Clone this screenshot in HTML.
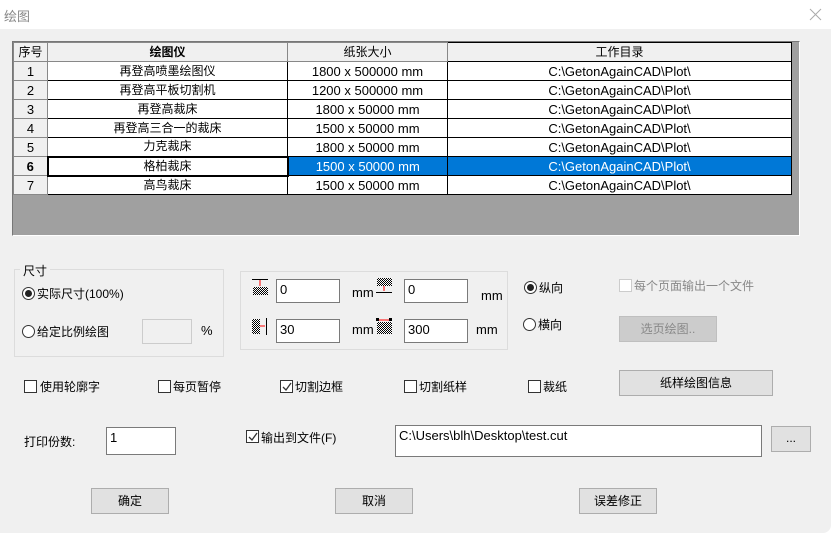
<!DOCTYPE html><html><head><meta charset="utf-8"><style>
*{margin:0;padding:0;box-sizing:border-box}
body{width:831px;height:533px;background:#fff;font-family:"Liberation Sans","Noto Sans CJK SC",sans-serif;font-size:12px;color:#000;position:relative;overflow:hidden}
.a{position:absolute;white-space:nowrap}
#body{position:absolute;left:0;top:29px;width:831px;height:504px;background:#f0f0f0;border-bottom-right-radius:8px}
table{position:absolute;left:13px;top:42px;border-collapse:collapse;font-size:12px}
td{border:1px solid #000;height:19px;text-align:center;background:#fff;padding:0;line-height:17px}
td.l{font-size:13px}
tr.h td{background:#f0f0f0;border-color:#888}
td.n{background:#f0f0f0;border-color:#888;font-size:13px}
.in{position:absolute;background:#fff;border:1px solid #7a7a7a;padding-left:3px;line-height:20px;font-size:13px}
.btn{position:absolute;background:#e1e1e1;border:1px solid #adadad;text-align:center;font-size:12px}
.cb{position:absolute;width:13px;height:13px;border:1px solid #333;background:#fff}
.rd{position:absolute;width:13px;height:13px;border:1px solid #333;border-radius:50%;background:#fff}
.grp{position:absolute;border:1px solid #dcdcdc}
.mm{font-size:13px}
</style></head><body>
<div class="a" style="left:4px;top:6px;font-size:13px;color:#888">绘图</div>
<svg class="a" style="left:809px;top:8px" width="13" height="13"><path d="M1 1L12 12M12 1L1 12" stroke="#aaa" stroke-width="1"/></svg>
<div id="body"></div>
<div class="a" style="left:12px;top:41px;width:788px;height:195px;background:#a0a0a0;border-top:1px solid #777;border-left:1px solid #777;border-right:1px solid #fff;border-bottom:1px solid #fff"></div>
<svg width="0" height="0" style="position:absolute"><defs><pattern id="p" width="2" height="2" patternUnits="userSpaceOnUse"><rect width="2" height="2" fill="#fff"/><rect width="1" height="1" fill="#000"/><rect x="1" y="1" width="1" height="1" fill="#000"/></pattern></defs></svg>
<table>
<tr class="h"><td style="width:34px">序号</td><td style="width:240px;font-weight:bold">绘图仪</td><td style="width:160px">纸张大小</td><td style="width:344px;border-color:#000 #000 #000 #888">工作目录</td></tr>
<tr><td class="n">1</td><td>再登高喷墨绘图仪</td><td class="l">1800 x 500000 mm</td><td class="l">C:\GetonAgainCAD\Plot\</td></tr>
<tr><td class="n">2</td><td>再登高平板切割机</td><td class="l">1200 x 500000 mm</td><td class="l">C:\GetonAgainCAD\Plot\</td></tr>
<tr><td class="n">3</td><td>再登高裁床</td><td class="l">1800 x 50000 mm</td><td class="l">C:\GetonAgainCAD\Plot\</td></tr>
<tr><td class="n">4</td><td>再登高三合一的裁床</td><td class="l">1500 x 50000 mm</td><td class="l">C:\GetonAgainCAD\Plot\</td></tr>
<tr><td class="n">5</td><td>力克裁床</td><td class="l">1800 x 50000 mm</td><td class="l">C:\GetonAgainCAD\Plot\</td></tr>
<tr><td class="n" style="font-weight:bold">6</td><td style="border:2px solid #000">格柏裁床</td><td class="l" style="background:#0078d7;color:#fff">1500 x 50000 mm</td><td class="l" style="background:#0078d7;color:#fff">C:\GetonAgainCAD\Plot\</td></tr>
<tr><td class="n">7</td><td>高鸟裁床</td><td class="l">1500 x 50000 mm</td><td class="l">C:\GetonAgainCAD\Plot\</td></tr>
</table>

<div class="grp" style="left:14px;top:269px;width:210px;height:88px"></div>
<div class="a" style="left:20px;top:262px;background:#f0f0f0;padding:0 3px">尺寸</div>
<div class="rd" style="left:22px;top:287px"></div><div class="a" style="left:25px;top:290px;width:7px;height:7px;border-radius:50%;background:#222"></div>
<div class="a" style="left:37px;top:285px">实际尺寸(100%)</div>
<div class="rd" style="left:22px;top:325px"></div>
<div class="a" style="left:37px;top:323px">给定比例绘图</div>
<div class="a" style="left:142px;top:319px;width:50px;height:25px;border:1px solid #ccc;background:#f0f0f0"></div>
<div class="a mm" style="left:201px;top:323px">%</div>

<div class="grp" style="left:240px;top:271px;width:268px;height:79px"></div>
<svg class="a" style="left:252px;top:279px" width="16" height="16"><line x1="0" y1="0.5" x2="16" y2="0.5" stroke="#000"/><line x1="8" y1="1" x2="8" y2="7" stroke="red"/><rect x="1" y="8" width="15" height="8" fill="url(#p)"/></svg>
<svg class="a" style="left:376px;top:278px" width="16" height="17"><rect x="1" y="0" width="15" height="8" fill="url(#p)"/><line x1="8" y1="8" x2="8" y2="13" stroke="red"/><line x1="0" y1="14.5" x2="16" y2="14.5" stroke="#000"/></svg>
<svg class="a" style="left:252px;top:318px" width="16" height="17"><rect x="0" y="1" width="8" height="15" fill="url(#p)"/><line x1="8" y1="8" x2="13" y2="8" stroke="red"/><line x1="14.5" y1="0" x2="14.5" y2="17" stroke="#000"/></svg>
<svg class="a" style="left:376px;top:318px" width="16" height="17"><line x1="2" y1="2" x2="14" y2="2" stroke="red"/><rect x="0" y="0" width="3" height="3" fill="#000"/><rect x="13" y="0" width="3" height="3" fill="#000"/><rect x="1" y="4" width="15" height="12" fill="url(#p)"/></svg>
<div class="in" style="left:276px;top:279px;width:64px;height:24px">0</div>
<div class="a mm" style="left:352px;top:285px">mm</div>
<div class="in" style="left:404px;top:279px;width:64px;height:24px">0</div>
<div class="a mm" style="left:481px;top:288px">mm</div>
<div class="in" style="left:276px;top:319px;width:64px;height:24px">30</div>
<div class="a mm" style="left:352px;top:322px">mm</div>
<div class="in" style="left:404px;top:319px;width:64px;height:24px">300</div>
<div class="a mm" style="left:476px;top:322px">mm</div>

<div class="rd" style="left:524px;top:281px"></div><div class="a" style="left:527px;top:284px;width:7px;height:7px;border-radius:50%;background:#222"></div>
<div class="a" style="left:539px;top:279px">纵向</div>
<div class="rd" style="left:523px;top:318px"></div>
<div class="a" style="left:538px;top:316px">横向</div>
<div class="cb" style="left:619px;top:279px;border-color:#ccc"></div>
<div class="a" style="left:634px;top:277px;color:#888">每个页面输出一个文件</div>
<div class="btn" style="left:619px;top:316px;width:98px;height:26px;line-height:24px;background:#ccc;border-color:#bfbfbf;color:#888">选页绘图..</div>

<div class="cb" style="left:24px;top:380px"></div><div class="a" style="left:40px;top:378px">使用轮廓字</div>
<div class="cb" style="left:158px;top:380px"></div><div class="a" style="left:173px;top:378px">每页暂停</div>
<div class="cb" style="left:280px;top:380px"></div><svg class="a" style="left:282px;top:382px" width="10" height="10"><path d="M1 5L4 8L9 1" stroke="#333" fill="none" stroke-width="1.3"/></svg><div class="a" style="left:295px;top:378px">切割边框</div>
<div class="cb" style="left:404px;top:380px"></div><div class="a" style="left:419px;top:378px">切割纸样</div>
<div class="cb" style="left:528px;top:380px"></div><div class="a" style="left:543px;top:378px">裁纸</div>
<div class="btn" style="left:619px;top:370px;width:154px;height:26px;line-height:24px">纸样绘图信息</div>

<div class="a" style="left:24px;top:433px">打印份数:</div>
<div class="in" style="left:106px;top:427px;width:70px;height:28px;line-height:20px">1</div>
<div class="cb" style="left:246px;top:430px"></div><svg class="a" style="left:248px;top:432px" width="10" height="10"><path d="M1 5L4 8L9 1" stroke="#333" fill="none" stroke-width="1.3"/></svg>
<div class="a" style="left:261px;top:429px">输出到文件(F)</div>
<div class="in" style="left:395px;top:425px;width:367px;height:32px;line-height:20px">C:\Users\blh\Desktop\test.cut</div>
<div class="btn" style="left:771px;top:426px;width:40px;height:26px;line-height:22px">...</div>

<div class="btn" style="left:91px;top:488px;width:78px;height:26px;line-height:24px">确定</div>
<div class="btn" style="left:335px;top:488px;width:78px;height:26px;line-height:24px">取消</div>
<div class="btn" style="left:579px;top:488px;width:78px;height:26px;line-height:24px">误差修正</div>
</body></html>
